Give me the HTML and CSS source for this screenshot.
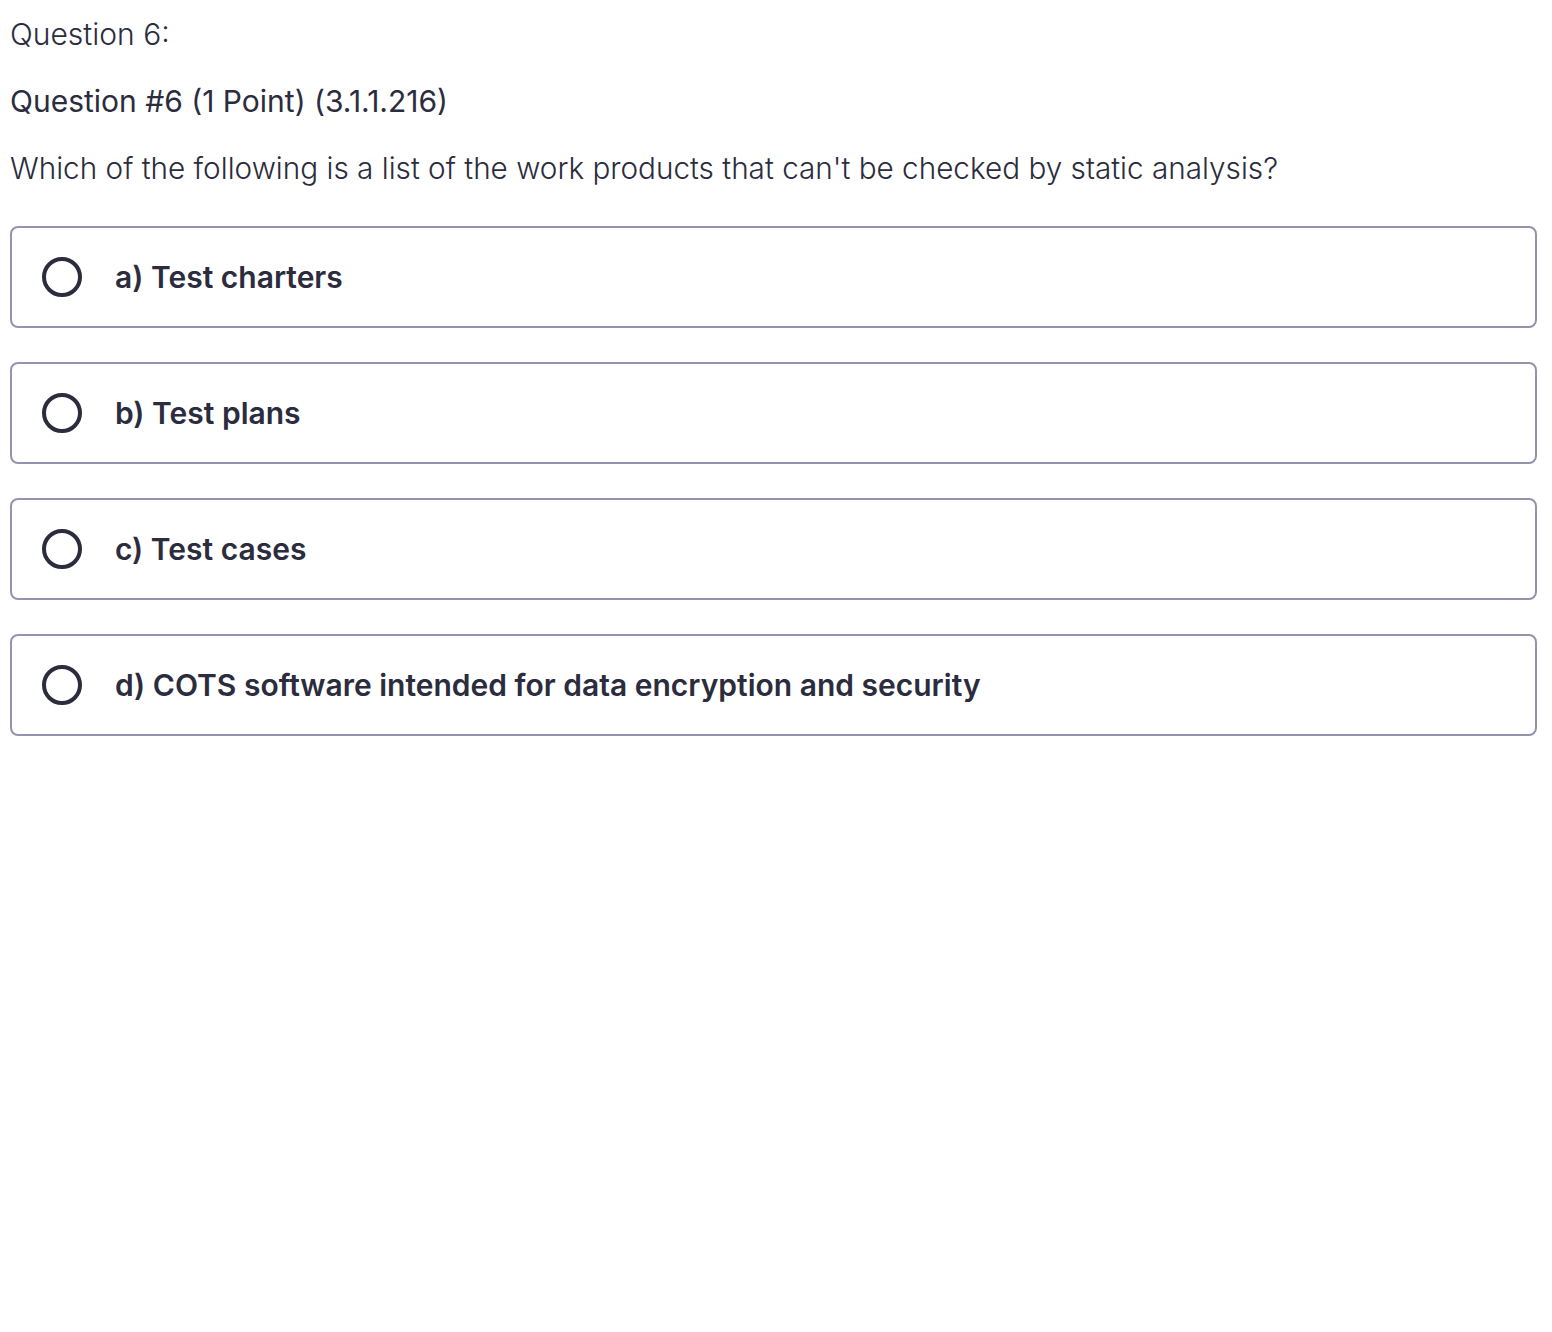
FILE: index.html
```html
<!DOCTYPE html>
<html>
<head>
<meta charset="utf-8">
<link rel="stylesheet" href="styles.css">
</head>
<body>
<div class="page">
  <div class="qnum">Question 6:</div>
  <div class="qtitle">Question #6 (1 Point) (3.1.1.216)</div>
  <div class="qtext">Which of the following is a list of the work products that can't be checked by static analysis?</div>
  <div class="options">
    <div class="option"><span class="radio"></span><span class="label">a) Test charters</span></div>
    <div class="option"><span class="radio"></span><span class="label">b) Test plans</span></div>
    <div class="option"><span class="radio"></span><span class="label">c) Test cases</span></div>
    <div class="option"><span class="radio"></span><span class="label">d) COTS software intended for data encryption and security</span></div>
  </div>
</div>
</body>
</html>
```
FILE: styles.css
```css
html, body { margin: 0; padding: 0; background: #fff; }
body { font-family: Inter, "Noto Sans", sans-serif; color: #2b2c3d; }
.page { padding: 14px 15px 0 10px; }
.qnum { font-size: 30px; font-weight: 300; line-height: 40px; }
.qtitle { font-size: 30px; font-weight: 400; line-height: 40px; margin-top: 27px; }
.qtext { font-size: 29.7px; font-weight: 300; line-height: 40px; margin-top: 27px; }
.options { display: flex; flex-direction: column; gap: 34px; margin-top: 38px; }
.option {
  display: flex; align-items: center; height: 98px;
  border: 2px solid #9194ac; border-radius: 8px;
  padding-left: 30px;
}
.radio {
  width: 32px; height: 32px; border: 4px solid #2b2c3d; border-radius: 50%;
  flex: none;
}
.label { margin-left: 33px; font-size: 30px; font-weight: 600; }
```
